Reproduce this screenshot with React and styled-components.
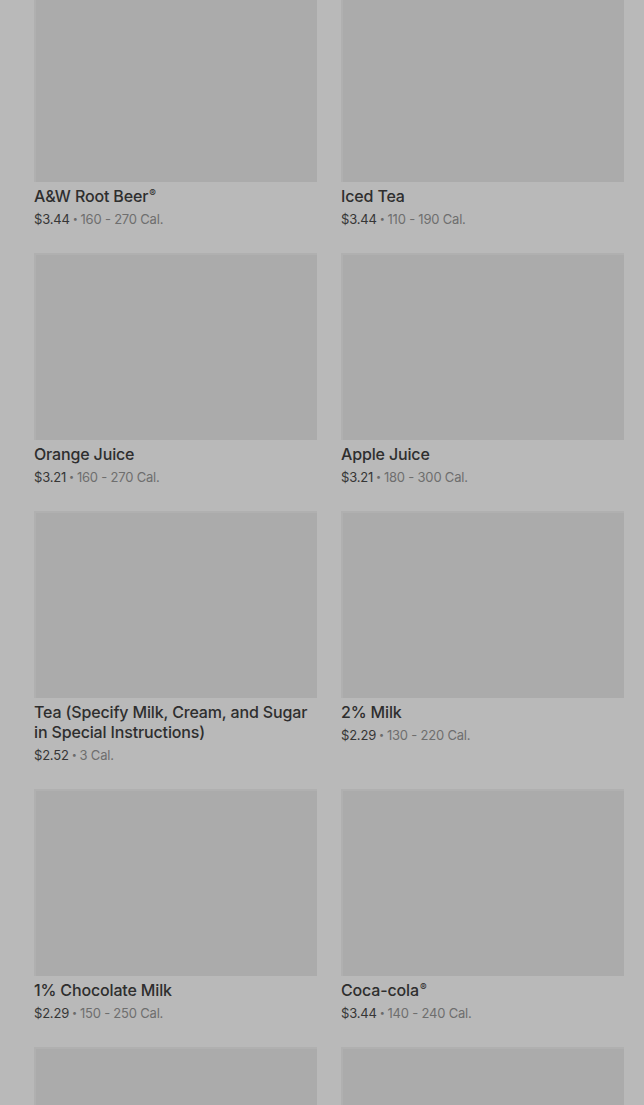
import React from "react";
import styled, { createGlobalStyle } from "styled-components";

const items = [
	{ name: "A&W Root Beer®", price: "$3.44", cal: "160 - 270 Cal." },
	{ name: "Iced Tea", price: "$3.44", cal: "110 - 190 Cal." },
	{ name: "Orange Juice", price: "$3.21", cal: "160 - 270 Cal." },
	{ name: "Apple Juice", price: "$3.21", cal: "180 - 300 Cal." },
	{
		name: "Tea (Specify Milk, Cream, and Sugar in Special Instructions)",
		price: "$2.52",
		cal: "3 Cal.",
	},
	{ name: "2% Milk", price: "$2.29", cal: "130 - 220 Cal." },
	{ name: "1% Chocolate Milk", price: "$2.29", cal: "150 - 250 Cal." },
	{ name: "Coca-cola®", price: "$3.44", cal: "140 - 240 Cal." },
	{ name: "", price: "", cal: "" },
	{ name: "", price: "", cal: "" },
];

// the ® mark sits small and raised, like a superscript
const renderName = (name) => {
	const parts = name.split("®");
	return parts.map((p, i) => (
		<React.Fragment key={i}>
			{p}
			{i < parts.length - 1 && <Reg>®</Reg>}
		</React.Fragment>
	));
};

const App = () => {
	return (
		<>
			<Global />
			<Page>
				<Grid>
					{items.map((item, i) => (
						<Card key={i}>
							<Photo />
							{item.name && (
								<>
									<Title>{renderName(item.name)}</Title>
									<Meta>
										<Price>{item.price}</Price>
										<Dot>•</Dot>
										<Cal>{item.cal}</Cal>
									</Meta>
								</>
							)}
						</Card>
					))}
				</Grid>
			</Page>
		</>
	);
};

export default App;

const Global = createGlobalStyle`
	html, body {
		margin: 0;
		padding: 0;
		background: #b9b9b9;
		overflow: hidden;
	}
	body {
		font-family: Inter, "Noto Sans", sans-serif;
	}
`;

const Page = styled.div`
	width: 644px;
	height: 1105px;
	overflow: hidden;
	background: #b9b9b9;
	padding: 0 20px 0 34px;
	box-sizing: border-box;
`;

const Grid = styled.div`
	margin-top: -5px;
	display: grid;
	grid-template-columns: 283px 283px;
	column-gap: 24px;
	row-gap: 25px;
	align-items: start;
`;

const Card = styled.div`
	display: flex;
	flex-direction: column;
`;

const Photo = styled.div`
	height: 187px;
	background: #ababab;
	box-shadow: inset 3px 3px 0 -1px #b0b0b0;
`;

const Title = styled.div`
	margin-top: 4px;
	font-size: 16px;
	line-height: 20px;
	font-weight: 500;
	color: #2e2e2e;
	letter-spacing: -0.15px;
`;

const Reg = styled.span`
	font-size: 10px;
	vertical-align: 5px;
	line-height: 0;
	margin-left: 1px;
`;

const Meta = styled.div`
	margin-top: 4px;
	display: flex;
	align-items: center;
	gap: 3px;
	font-size: 13px;
	line-height: 18px;
	letter-spacing: -0.2px;
`;

const Price = styled.span`
	color: #363636;
`;

const Dot = styled.span`
	color: #6a6a6a;
	font-size: 9px;
`;

const Cal = styled.span`
	color: #6e6e6e;
`;
